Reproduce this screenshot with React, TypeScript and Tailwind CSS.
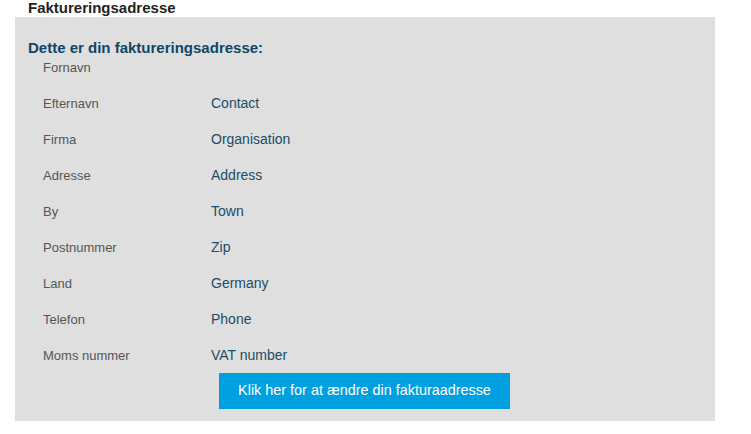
import React from "react";

const rows: [string, string][] = [
  ["Fornavn", ""],
  ["Efternavn", "Contact"],
  ["Firma", "Organisation"],
  ["Adresse", "Address"],
  ["By", "Town"],
  ["Postnummer", "Zip"],
  ["Land", "Germany"],
  ["Telefon", "Phone"],
  ["Moms nummer", "VAT number"],
];

export default function App() {
  return (
    <div className="w-[751px] h-[434px] bg-white" style={{ fontFamily: '"Liberation Sans", Arial, sans-serif' }}>
      <div className="pl-[28px] text-[15px] leading-[15px] font-bold text-[#222]">Faktureringsadresse</div>
      <div className="ml-[15px] mt-[2px] w-[700px] h-[404px] bg-[#dfdfdf] pt-[22px] pl-[13px]">
        <div className="text-[15px] leading-[17px] font-bold text-[#0e4667]">Dette er din faktureringsadresse:</div>
        <div className="mt-[3px] flex flex-col gap-[20px] pl-[15px]">
          {rows.map(([label, value]) => (
            <div key={label} className="flex h-[16px]">
              <div className="w-[168px] text-[13px] leading-[16px] pt-[1px] text-[#555]">{label}</div>
              <div className="text-[14px] leading-[16px] text-[#1a4d6a]">{value}</div>
            </div>
          ))}
        </div>
        <div className="mt-[10px] ml-[191px] w-[291px] h-[36px] bg-[#009fe0] flex items-center justify-center text-white text-[14.4px]">
          Klik her for at ændre din fakturaadresse
        </div>
      </div>
    </div>
  );
}
